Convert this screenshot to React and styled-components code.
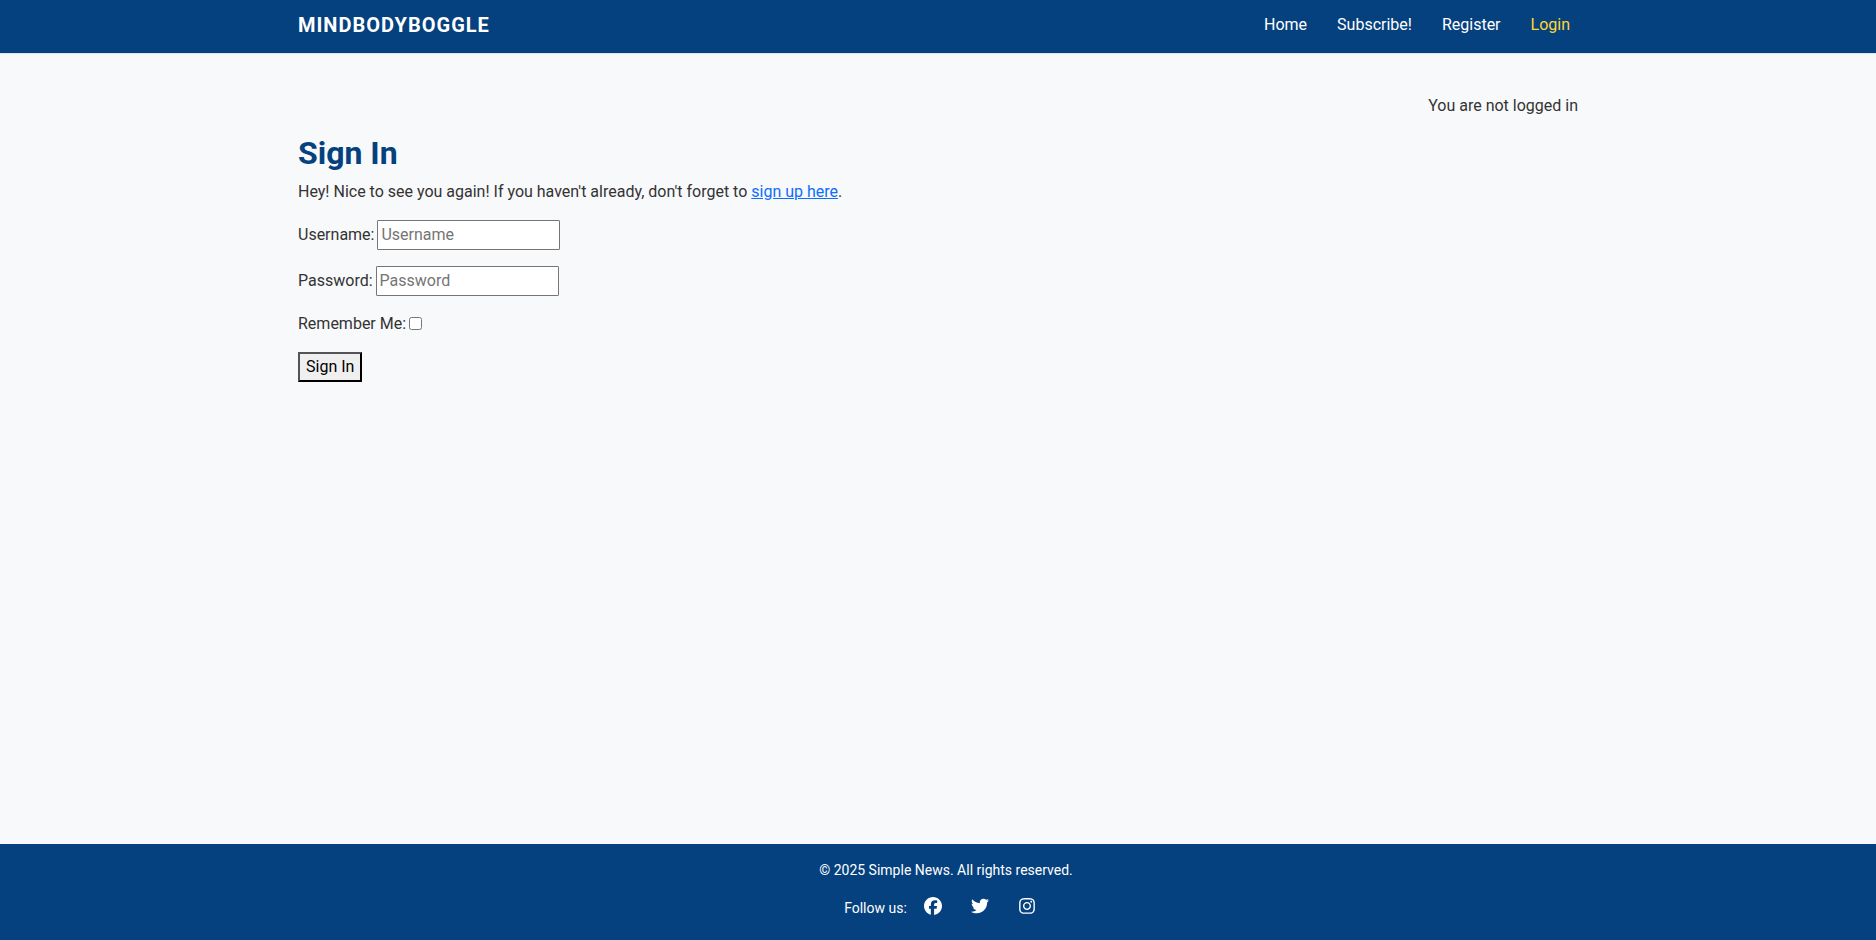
import React from "react";
import styled, { createGlobalStyle } from "styled-components";
import { FaFacebook, FaTwitter, FaInstagram } from "react-icons/fa6";

const GlobalStyle = createGlobalStyle`
  *, *::before, *::after { box-sizing: border-box; }
  body {
    margin: 0;
    background: #f8f9fb;
    color: #333;
    font-family: Roboto, "Liberation Sans", sans-serif;
    font-size: 16px;
    line-height: 24px;
  }
`;

const Page = styled.div`
  min-height: 100vh;
  display: flex;
  flex-direction: column;
`;

const Container = styled.div`
  width: 100%;
  max-width: 1320px;
  margin: 0 auto;
  padding: 0 20px;
`;

const Header = styled.header`
  background: #05417e;
  border-bottom: 1px solid #dde5ee;
`;

const HeaderRow = styled(Container)`
  display: flex;
  justify-content: space-between;
  align-items: center;
  padding-top: 10px;
  padding-bottom: 13px;
`;

const Brand = styled.a`
  color: #fff;
  font-size: 20px;
  font-weight: 700;
  line-height: 30px;
  letter-spacing: 1px;
  text-transform: uppercase;
  text-decoration: none;
`;

const Nav = styled.nav`
  display: flex;
  gap: 14px;
`;

const NavLink = styled.a`
  padding: 0 8px;
  color: ${({ $active }) => ($active ? "#ffd633" : "#fff")};
  text-decoration: none;
`;

const Main = styled(Container).attrs({ as: "main" })`
  flex: 1;
  padding-top: 40px;
`;

const Status = styled.p`
  margin: 0;
  text-align: right;
`;

const Title = styled.h1`
  margin: 16px 0 8px;
  color: #05417e;
  font-size: 32px;
  font-weight: 700;
  line-height: 38px;
`;

const Text = styled.p`
  margin: 0 0 16px;
`;

const Link = styled.a`
  color: #0d6efd;
`;

const Field = styled.div`
  display: flex;
  align-items: center;
  gap: 3px;
  margin-bottom: 16px;
`;

const Input = styled.input`
  width: 183px;
  height: 30px;
  margin: 0;
  padding: 1px 3px 3px;
  border: 1px solid #767676;
  border-radius: 1px;
  background: #fff;
  font: inherit;

  &::placeholder { color: #757575; }
`;

const Checkbox = styled.input`
  width: 13px;
  height: 13px;
  margin: 0 0 2px;
`;

const Submit = styled.button`
  height: 30px;
  padding: 1px 6px;
  border: 2px outset #000;
  border-radius: 0;
  background: #efefef;
  color: #000;
  font: inherit;
`;

const Footer = styled.footer`
  display: flex;
  flex-direction: column;
  align-items: center;
  gap: 16px;
  padding: 15px 0 21px 16px;
  background: #05417e;
  color: #fff;
  font-size: 14px;
  line-height: 22px;
`;

const Copyright = styled.p`
  margin: 0;
`;

const Social = styled.div`
  display: flex;
  align-items: center;
  gap: 5px;
`;

const SocialLink = styled.a`
  display: flex;
  padding: 0 12px;
  margin-bottom: 4px;
  color: #fff;
  font-size: 18px;
`;

export default function App() {
  return (
    <Page>
      <GlobalStyle />
      <Header>
        <HeaderRow>
          <Brand href="#">MindBodyBoggle</Brand>
          <Nav>
            <NavLink href="#">Home</NavLink>
            <NavLink href="#">Subscribe!</NavLink>
            <NavLink href="#">Register</NavLink>
            <NavLink href="#" $active>Login</NavLink>
          </Nav>
        </HeaderRow>
      </Header>
      <Main>
        <Status>You are not logged in</Status>
        <Title>Sign In</Title>
        <Text>
          Hey! Nice to see you again! If you haven't already, don't forget to{" "}
          <Link href="#">sign up here</Link>.
        </Text>
        <form>
          <Field>
            <label htmlFor="username">Username:</label>
            <Input id="username" type="text" placeholder="Username" />
          </Field>
          <Field>
            <label htmlFor="password">Password:</label>
            <Input id="password" type="password" placeholder="Password" />
          </Field>
          <Field>
            <label htmlFor="remember">Remember Me:</label>
            <Checkbox id="remember" type="checkbox" />
          </Field>
          <Submit type="button">Sign In</Submit>
        </form>
      </Main>
      <Footer>
        <Copyright>© 2025 Simple News. All rights reserved.</Copyright>
        <Social>
          <span>Follow us:</span>
          <SocialLink href="#" aria-label="Facebook"><FaFacebook /></SocialLink>
          <SocialLink href="#" aria-label="Twitter"><FaTwitter /></SocialLink>
          <SocialLink href="#" aria-label="Instagram"><FaInstagram /></SocialLink>
        </Social>
      </Footer>
    </Page>
  );
}
